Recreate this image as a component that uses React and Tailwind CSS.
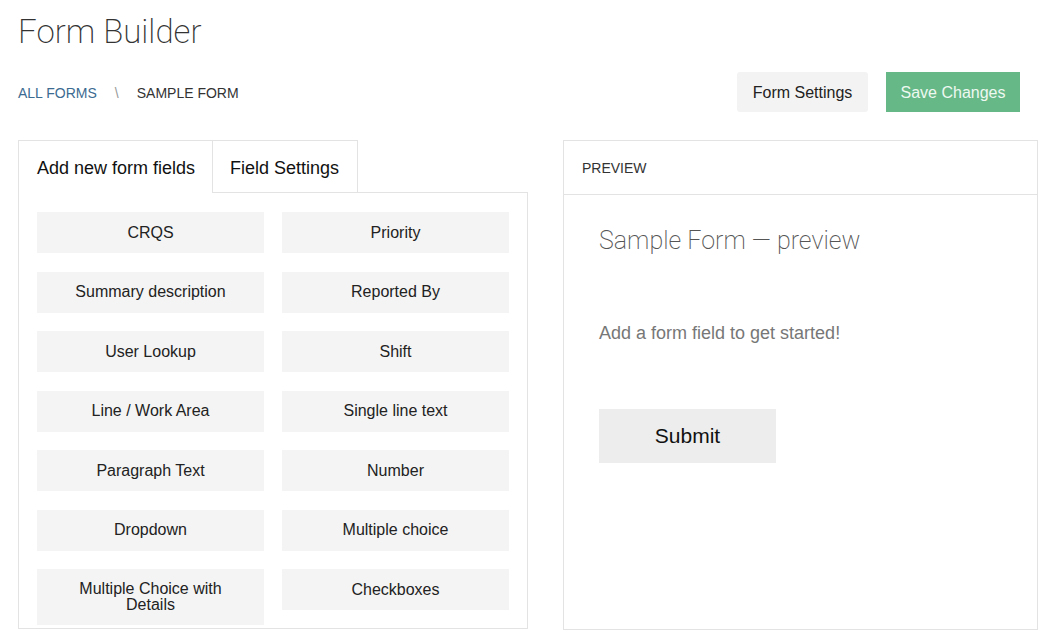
import React from "react";

const fields = [
  "CRQS",
  "Priority",
  "Summary description",
  "Reported By",
  "User Lookup",
  "Shift",
  "Line / Work Area",
  "Single line text",
  "Paragraph Text",
  "Number",
  "Dropdown",
  "Multiple choice",
  "Multiple Choice with Details",
  "Checkboxes",
];

export default function App() {
  return (
    <div className="min-h-[644px] bg-white px-[18px] pt-[11px] text-[#222] font-['Liberation_Sans',Arial,sans-serif]">
      <h1 className="font-['Roboto',sans-serif] font-extralight text-[33px] leading-[42px] text-[#333]">
        Form Builder
      </h1>

      <div className="mt-[19px] flex h-[40px] items-center justify-between pr-[18px]">
        <div className="flex items-center pt-[2px] text-[14px] uppercase">
          <a href="#" className="text-[#3c6b91]">All forms</a>
          <span className="mx-[18px] text-[#999]">\</span>
          <span className="text-[#333]">Sample form</span>
        </div>
        <div className="flex items-center gap-[18px] text-[16px]">
          <button className="h-[40px] w-[131px] rounded-[3px] bg-[#f3f3f3] pt-[2px] text-[#222]">
            Form Settings
          </button>
          <button className="h-[40px] w-[134px] bg-[#66b887] pt-[2px] text-[#eef8f1]">
            Save Changes
          </button>
        </div>
      </div>

      <div className="mt-[28px] flex gap-[35px]">
        {/* left: tabs + field palette */}
        <div className="w-[510px]">
          <div className="flex text-[18px]">
            <div className="h-[53px] w-[194px] border-l border-t border-[#e3e3e3] pl-[18px] leading-[55px] text-[#111]">
              Add new form fields
            </div>
            <div className="h-[53px] w-[146px] border border-[#e3e3e3] pl-[17px] leading-[55px] text-[#111]">
              Field Settings
            </div>
            <div className="flex-1 border-b border-[#e3e3e3]" />
          </div>
          <div className="h-[436px] border-x border-b border-[#e3e3e3] px-[18px] pt-[19px]">
            <div className="grid grid-cols-2 gap-x-[18px] gap-y-[18.5px] text-[16px]">
              {fields.map((f, i) => (
                <button
                  key={f}
                  className={
                    i === 12
                      ? "flex h-[56px] items-start justify-center bg-[#f4f4f4] px-[30px] pt-[12px] leading-[16px] text-[#222]"
                      : "flex h-[41px] items-center justify-center bg-[#f4f4f4] text-[#222]"
                  }
                >
                  {f}
                </button>
              ))}
            </div>
          </div>
        </div>

        {/* right: preview */}
        <div className="w-[475px]">
          <div className="h-[490px] border border-[#e3e3e3]">
            <div className="h-[54px] border-b border-[#e3e3e3] pl-[18px] text-[14px] leading-[54px] text-[#333]">
              PREVIEW
            </div>
            <div className="px-[35px] pt-[29px]">
              <h2 className="font-['Roboto',sans-serif] font-extralight text-[25px] leading-[34px] text-[#555]">
                Sample Form — preview
              </h2>
              <p className="mt-[62px] text-[18px] text-[#777]">
                Add a form field to get started!
              </p>
              <button className="mt-[62px] h-[54px] w-[177px] bg-[#ededed] text-[21px] text-[#111]">
                Submit
              </button>
            </div>
          </div>
        </div>
      </div>
    </div>
  );
}
